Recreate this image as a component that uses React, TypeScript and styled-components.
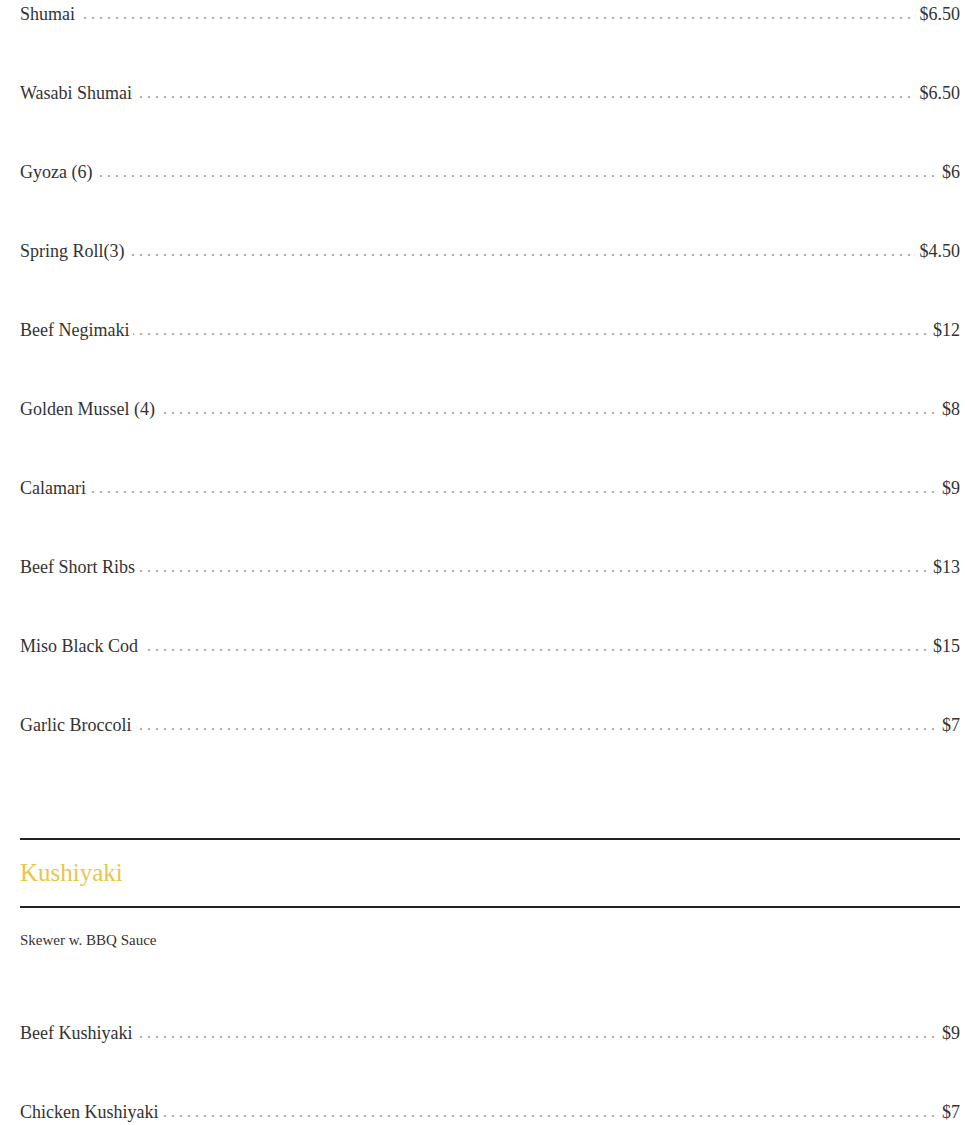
import React from 'react';
import styled, { createGlobalStyle } from 'styled-components';

const GlobalStyle = createGlobalStyle`
    html, body {
        margin: 0;
        padding: 0;
        background: #ffffff;
    }
    body {
        font-family: 'Liberation Serif', 'Times New Roman', serif;
        color: #333333;
    }
`;

const StyledPage = styled.div`
    padding: 2px 5px 0 20px;
`;

const StyledList = styled.ul`
    list-style: none;
    margin: 0;
    padding: 0;
`;

const LEADER = '. '.repeat(160);

const StyledRow = styled.li`
    overflow: hidden;
    font-size: 18px;
    line-height: 24px;
    margin-bottom: 55px;

    &::before {
        float: left;
        width: 0;
        margin-left: -1px;
        white-space: nowrap;
        font-size: 16px;
        color: #9a9a9a;
        content: '${LEADER}';
    }
`;

const StyledName = styled.span`
    background: #ffffff;
    padding-right: 4px;
`;

const StyledPrice = styled.span`
    float: right;
    background: #ffffff;
    padding-left: 4px;
`;

const StyledSection = styled.section<{ $gap: number }>`
    margin-top: ${(p) => p.$gap}px;
`;

const StyledHeader = styled.div`
    border-top: 2px solid #222222;
    border-bottom: 2px solid #222222;
    padding: 18px 0;
`;

const StyledTitle = styled.h2`
    margin: 0;
    font-size: 25px;
    line-height: 30px;
    font-weight: normal;
    color: #e6c64c;
`;

const StyledNote = styled.p`
    margin: 23px 0 72px;
    font-size: 15px;
    line-height: 18px;
    color: #333333;
`;

type Item = { name: string; price: string };

const starters: Item[] = [
    { name: 'Shumai', price: '$6.50' },
    { name: 'Wasabi Shumai', price: '$6.50' },
    { name: 'Gyoza (6)', price: '$6' },
    { name: 'Spring Roll(3)', price: '$4.50' },
    { name: 'Beef Negimaki', price: '$12' },
    { name: 'Golden Mussel (4)', price: '$8' },
    { name: 'Calamari', price: '$9' },
    { name: 'Beef Short Ribs', price: '$13' },
    { name: 'Miso Black Cod', price: '$15' },
    { name: 'Garlic Broccoli', price: '$7' },
];

const kushiyaki: Item[] = [
    { name: 'Beef Kushiyaki', price: '$9' },
    { name: 'Chicken Kushiyaki', price: '$7' },
];

function MenuList({ items }: { items: Item[] }) {
    return (
        <StyledList>
            {items.map((item) => (
                <StyledRow key={item.name}>
                    <StyledName>{item.name}</StyledName>
                    <StyledPrice>{item.price}</StyledPrice>
                </StyledRow>
            ))}
        </StyledList>
    );
}

function App() {
    return (
        <StyledPage>
            <GlobalStyle />
            <MenuList items={starters} />
            {/* section margin collapses with the last row's 55px */}
            <StyledSection $gap={101}>
                <StyledHeader>
                    <StyledTitle>Kushiyaki</StyledTitle>
                </StyledHeader>
                <StyledNote>Skewer w. BBQ Sauce</StyledNote>
                <MenuList items={kushiyaki} />
            </StyledSection>
        </StyledPage>
    );
}

export default App;
